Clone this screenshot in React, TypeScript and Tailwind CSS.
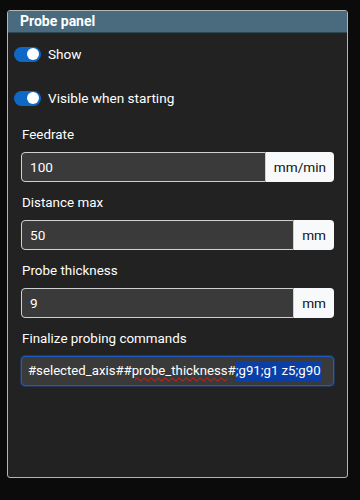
import React from "react";

function Toggle({ label }: { label: string }) {
  return (
    <div className="flex h-5 items-center gap-[7px] pl-[6px]">
      <span className="flex h-[15px] w-[27px] items-center justify-end rounded-full bg-[#0f68c6] pr-[2px]">
        <span className="h-[12px] w-[12px] rounded-full bg-white" />
      </span>
      <span className="text-[13.6px] text-white">{label}</span>
    </div>
  );
}

function Field({ label, value, unit }: { label: string; value: string; unit: string }) {
  return (
    <div className="mx-[13px]">
      <div className="h-[18px] pl-px text-[13.4px] leading-[18px] text-white">{label}</div>
      <div className="mt-[8px] flex h-[30px]">
        <div className="flex flex-1 items-center rounded-l-[4px] border border-[#d0d0d0] bg-[#3a3a3a] pl-[8px] text-[13.6px] text-white">
          {value}
        </div>
        <div className="flex items-center rounded-r-[4px] bg-[#f8f9fa] px-[8px] text-[13.6px] text-[#111]">
          {unit}
        </div>
      </div>
    </div>
  );
}

export default function App() {
  return (
    <div
      className="h-[500px] w-[360px] bg-[#0b0b0b] pl-[7px] pt-[10px]"
      style={{ fontFamily: "Roboto, 'Liberation Sans', sans-serif" }}
    >
      <div className="flex h-[468px] w-[341px] flex-col overflow-hidden rounded-[3px] border border-[#b5b5b5] bg-[#222222]">
        <div className="flex h-[22px] items-center border-b border-[#2f4653] bg-[#4a6b7e] pl-[12px] text-[14px] font-bold text-white">
          Probe panel
        </div>
        <div className="flex flex-col pt-[11px]">
          <Toggle label="Show" />
          <div className="mt-[24px]">
            <Toggle label="Visible when starting" />
          </div>
          <div className="mt-[18px] flex flex-col gap-[12px]">
            <Field label="Feedrate" value="100" unit="mm/min" />
            <Field label="Distance max" value="50" unit="mm" />
            <Field label="Probe thickness" value="9" unit="mm" />
            <div className="mx-[13px]">
              <div className="h-[18px] pl-px text-[13.4px] leading-[18px] text-white">
                Finalize probing commands
              </div>
              <div className="mt-[8px] flex h-[30px] items-center overflow-hidden whitespace-nowrap rounded-[4px] border border-[#1e5bc4] bg-[#3a3a3a] pl-[6px] text-[13.2px] text-white shadow-[0_0_0_1px_rgba(30,91,196,0.35)]">
                <span>#selected_axis##</span>
                <span className="underline decoration-[#e02020] decoration-wavy decoration-1 underline-offset-[2px]">
                  probe_thickness
                </span>
                <span>#</span>
                <span className="bg-[#0b3fa8] text-white">;g91;g1 z5;g90</span>
              </div>
            </div>
          </div>
        </div>
      </div>
    </div>
  );
}
